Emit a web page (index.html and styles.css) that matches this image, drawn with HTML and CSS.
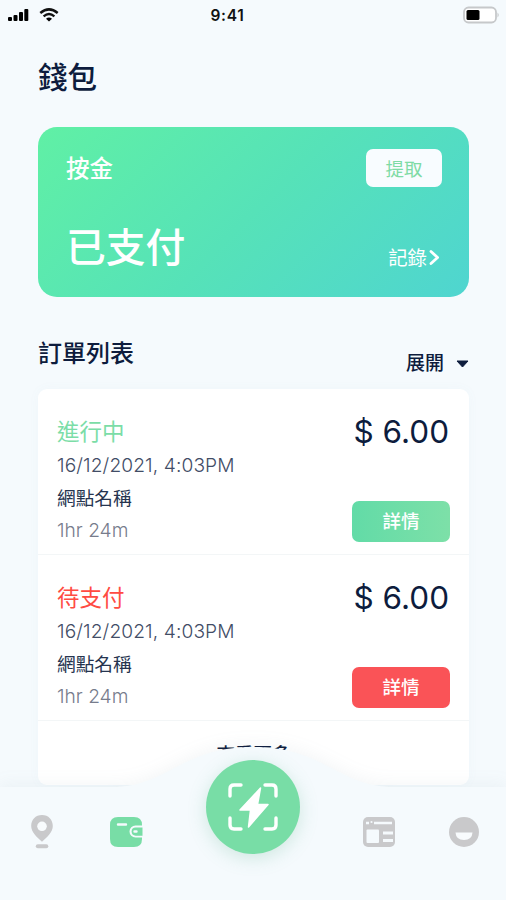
FILE: index.html
```html
<!DOCTYPE html>
<html lang="zh-Hant">

<head>
    <meta charset="UTF-8">
    <meta name="viewport" content="width=device-width, initial-scale=1.0">
    <title>錢包</title>
    <link rel="stylesheet" href="styles.css">
</head>

<body>
    <div class="app">
        <header class="status">
            <div class="signals">
                <svg width="21" height="14" viewBox="0 0 21 14">
                    <rect x="0" y="9" width="4" height="4" rx="1" />
                    <rect x="5.5" y="7" width="4" height="6" rx="1" />
                    <rect x="11" y="4" width="4" height="9" rx="1" />
                    <rect x="16.3" y="1" width="4" height="12" rx="1" />
                </svg>
                <svg width="20" height="14" viewBox="0 0 20 14">
                    <path d="M1.3 5 Q10 -2.2 18.7 5" fill="none" stroke="#111" stroke-width="2.5" />
                    <path d="M4.6 8.3 Q10 3.8 15.4 8.3" fill="none" stroke="#111" stroke-width="2.4" />
                    <path d="M7 10.7 Q10 8.2 13 10.7 L10 13.6Z" />
                </svg>
            </div>
            <span class="time">9:41</span>
            <svg class="battery" width="38" height="18" viewBox="0 0 38 18">
                <rect x="2" y="1.5" width="32" height="15" rx="4.5" fill="#fff" stroke="#c6c8ca" stroke-width="1.8" />
                <rect x="4.5" y="4" width="13" height="10" rx="1.5" fill="#000" />
                <path d="M35.5 6.5 Q38 9 35.5 11.5Z" fill="#c6c8ca" />
            </svg>
        </header>

        <h1 class="title">錢包</h1>

        <section class="wallet">
            <div class="wallet-row">
                <span class="deposit">按金</span>
                <button class="withdraw">提取</button>
            </div>
            <div class="wallet-row wallet-bottom">
                <strong class="paid">已支付</strong>
                <a class="record">記錄
                    <svg width="11" height="17" viewBox="0 0 11 17">
                        <path d="M2 1.5 L8.6 7.5 L2 13.5" fill="none" stroke="#fff" stroke-width="2.8" stroke-linecap="round" stroke-linejoin="round" />
                    </svg>
                </a>
            </div>
        </section>

        <div class="list-head">
            <h2>訂單列表</h2>
            <div class="expand">展開
                <svg width="13" height="8" viewBox="0 0 13 8">
                    <path d="M1 1 H12 L6.5 7Z" fill="#0d1c3d" stroke="#0d1c3d" stroke-linejoin="round" />
                </svg>
            </div>
        </div>

        <main class="orders">
            <article class="order">
                <div class="info">
                    <h3 class="doing">進行中</h3>
                    <p class="date">16/12/2021, 4:03PM</p>
                    <p class="place">網點名稱</p>
                    <p class="duration">1hr 24m</p>
                </div>
                <div class="side">
                    <span class="price">$ 6.00</span>
                    <button class="detail green">詳情</button>
                </div>
            </article>
            <article class="order">
                <div class="info">
                    <h3 class="waiting">待支付</h3>
                    <p class="date">16/12/2021, 4:03PM</p>
                    <p class="place">網點名稱</p>
                    <p class="duration">1hr 24m</p>
                </div>
                <div class="side">
                    <span class="price">$ 6.00</span>
                    <button class="detail red">詳情</button>
                </div>
            </article>
            <div class="more">查看更多</div>
        </main>

        <!-- bottom bar lies over the list -->
        <nav class="tabbar">
            <svg class="hump" width="506" height="160" viewBox="0 0 506 160">
                <path d="M0 47 H112 C168 47 181 7 253 7 C325 7 338 47 394 47 H506 V160 H0Z" fill="#f5fafd" />
            </svg>
            <div class="tabs">
                <svg class="pin" width="24" height="36" viewBox="0 0 24 36">
                    <path d="M12 1 C5.5 1 1.2 5.8 1.2 12 C1.2 18.5 7 23 12 27.8 C17 23 22.8 18.5 22.8 12 C22.8 5.8 18.5 1 12 1Z" fill="#c9c9cb" />
                    <circle cx="12" cy="12.3" r="4.8" fill="#f8fbfd" />
                    <rect x="5.8" y="30.2" width="12.5" height="4" rx="2" fill="#c9c9cb" />
                </svg>
                <svg class="purse" width="35" height="32" viewBox="0 0 35 32">
                    <path d="M9 1 H25 Q33 1 33 9 V9.5 H26.5 A6 6 0 0 0 26.5 21.5 H33 V23 Q33 31 25 31 H9 Q1 31 1 23 V9 Q1 1 9 1Z" fill="#78dda6" />
                    <path d="M33.5 11.5 H26.7 A4.1 4.1 0 0 0 26.7 19.7 H33.5Z" fill="#78dda6" />
                    <path d="M9 8.5 H17 M25.5 15.5 H27.5" stroke="#f5fafd" stroke-width="2.4" stroke-linecap="round" />
                </svg>
                <button class="scan">
                    <svg width="50" height="48" viewBox="0 0 50 48">
                        <path d="M2 13 V6 Q2 2 6 2 H13 M37 2 H44 Q48 2 48 6 V13 M48 35 V42 Q48 46 44 46 H37 M13 46 H6 Q2 46 2 42 V35" fill="none" stroke="#fff" stroke-width="3.4" stroke-linecap="round" />
                        <path d="M32.5 5 L12 27 H22.5 L20.5 44 L40 21.5 H29.5Z" fill="#fff" stroke="#fff" stroke-width="1.5" stroke-linejoin="round" />
                    </svg>
                </button>
                <svg class="news" width="34" height="32" viewBox="0 0 34 32">
                    <rect x="1" y="1" width="32" height="30" rx="5" fill="#c9c9cb" />
                    <path d="M4 7 H7 M12 7 H30" stroke="#f5fafd" stroke-width="2.3" />
                    <circle cx="9.5" cy="6" r="1.1" fill="#f5fafd" />
                    <rect x="4.5" y="13.5" width="12.5" height="13.5" rx="1" fill="#f5fafd" />
                    <path d="M21 17 H31 M21 24.5 H31" stroke="#f5fafd" stroke-width="3" />
                </svg>
                <svg class="smile" width="32" height="32" viewBox="0 0 32 32">
                    <circle cx="16" cy="16" r="15" fill="#c9c9cb" />
                    <path d="M7.5 16.5 H24.5 Q24 24 16 24 Q8 24 7.5 16.5Z" fill="#f8fbfd" />
                </svg>
            </div>
        </nav>
    </div>
</body>

</html>
```
FILE: styles.css
```css
* {
    box-sizing: border-box;
}
body {
    margin: 0;
    background: #f5fafd;
    color: #0d1c3d;
    font-family: Inter, "Noto Sans CJK TC", sans-serif;
}
h1, h2, h3, p {
    margin: 0;
    font-weight: 400;
}
button {
    border: none;
    padding: 0;
    font-family: inherit;
}
svg {
    display: block;
    flex-shrink: 0;
}
.app {
    position: relative;
    width: 506px;
    height: 900px;
    overflow: hidden;
}
.status {
    display: grid;
    grid-template-columns: 1fr auto 1fr;
    align-items: center;
    height: 30px;
    padding: 0 6px 0 8px;
    color: #111;
}
.signals {
    display: flex;
    gap: 10px;
}
.time {
    font-size: 15.5px;
    font-weight: 600;
    letter-spacing: 0.7px;
    margin-right: 53px;
}
.battery {
    justify-self: end;
}
.title {
    padding: 27px 38px 0;
    font-size: 29.5px;
    font-weight: 500;
    line-height: 40px;
}
.wallet {
    display: flex;
    flex-direction: column;
    justify-content: space-between;
    height: 170px;
    margin: 30px 37px 0 38px;
    padding: 22px 27px 24px 28px;
    border-radius: 19px;
    background: linear-gradient(135deg, #60f0a5 0%, #56e2b8 50%, #4fd5d0 100%);
    color: #fff;
}
.wallet-row {
    display: flex;
    justify-content: space-between;
    align-items: flex-start;
}
.wallet-bottom {
    align-items: flex-end;
}
.deposit {
    font-size: 23.5px;
    font-weight: 500;
    line-height: 40px;
}
.withdraw {
    width: 76px;
    height: 38px;
    border-radius: 7px;
    background: #f8fcff;
    color: #7edba5;
    font-size: 18.5px;
}
.paid {
    font-size: 39.8px;
    font-weight: 500;
    line-height: 50px;
}
.record {
    display: flex;
    align-items: center;
    gap: 2px;
    margin-right: 2px;
    font-size: 19.4px;
    line-height: 30px;
}
.list-head {
    display: flex;
    justify-content: space-between;
    height: 92px;
    padding: 40px 37px 0 38px;
}
.list-head h2 {
    font-size: 24px;
    font-weight: 500;
    line-height: 34px;
}
.expand {
    display: flex;
    align-items: center;
    gap: 12px;
    height: 30px;
    margin-top: 12px;
    font-size: 19px;
    font-weight: 500;
    line-height: 26px;
}
.orders {
    height: 396px;
    margin: 0 37px 0 38px;
    border-radius: 9px;
    background: #fff;
    box-shadow: 0 0 12px rgba(110, 160, 190, 0.04);
}
.order {
    display: flex;
    justify-content: space-between;
    height: 166px;
    padding: 25px 19px 12px 19px;
    border-bottom: 1px solid #f3f6f7;
}
.info h3 {
    height: 35px;
    font-size: 22.5px;
    line-height: 35px;
}
.info p {
    height: 33px;
    font-size: 19.2px;
    line-height: 33px;
}
.info .date {
    color: #424d66;
    font-weight: 300;
    letter-spacing: 0.1px;
}
.info .place {
    color: #26344f;
    font-size: 18.7px;
}
.info .duration {
    color: #777c8c;
    font-weight: 300;
    line-height: 31px;
}
.doing {
    color: #7bdda7;
}
.waiting {
    color: #ff4b42;
}
.side {
    display: flex;
    flex-direction: column;
    align-items: flex-end;
    justify-content: space-between;
}
.price {
    margin-right: 1px;
    font-size: 31.5px;
    line-height: 35px;
}
.detail {
    width: 98px;
    height: 41px;
    padding-bottom: 3px;
    border-radius: 7px;
    color: #fff;
    font-size: 18.5px;
    font-weight: 500;
}
.green {
    background: linear-gradient(90deg, #62dba7, #7de0a8);
}
.red {
    background: #fa5357;
}
.more {
    padding-top: 19px;
    text-align: center;
    font-size: 18.5px;
    font-weight: 500;
    line-height: 28px;
}
.tabbar {
    position: absolute;
    left: 0;
    bottom: 0;
    width: 506px;
    height: 160px;
}
.hump {
    filter: drop-shadow(0 -3px 8px rgba(100, 125, 140, 0.07));
}
.tabs {
    position: absolute;
    top: 20px;
    left: 0;
    display: flex;
    width: 506px;
    height: 140px;
    padding-left: 30px;
}
.pin {
    margin-top: 54px;
}
.purse {
    margin: 56px 0 0 55px;
}
.scan {
    display: flex;
    align-items: center;
    justify-content: center;
    width: 94px;
    height: 94px;
    margin-left: 62px;
    border-radius: 50%;
    background: #78dda6;
    box-shadow: 0 4px 18px rgba(90, 180, 140, 0.25);
}
.news {
    margin: 56px 0 0 62px;
}
.smile {
    margin: 56px 0 0 52px;
}
```
